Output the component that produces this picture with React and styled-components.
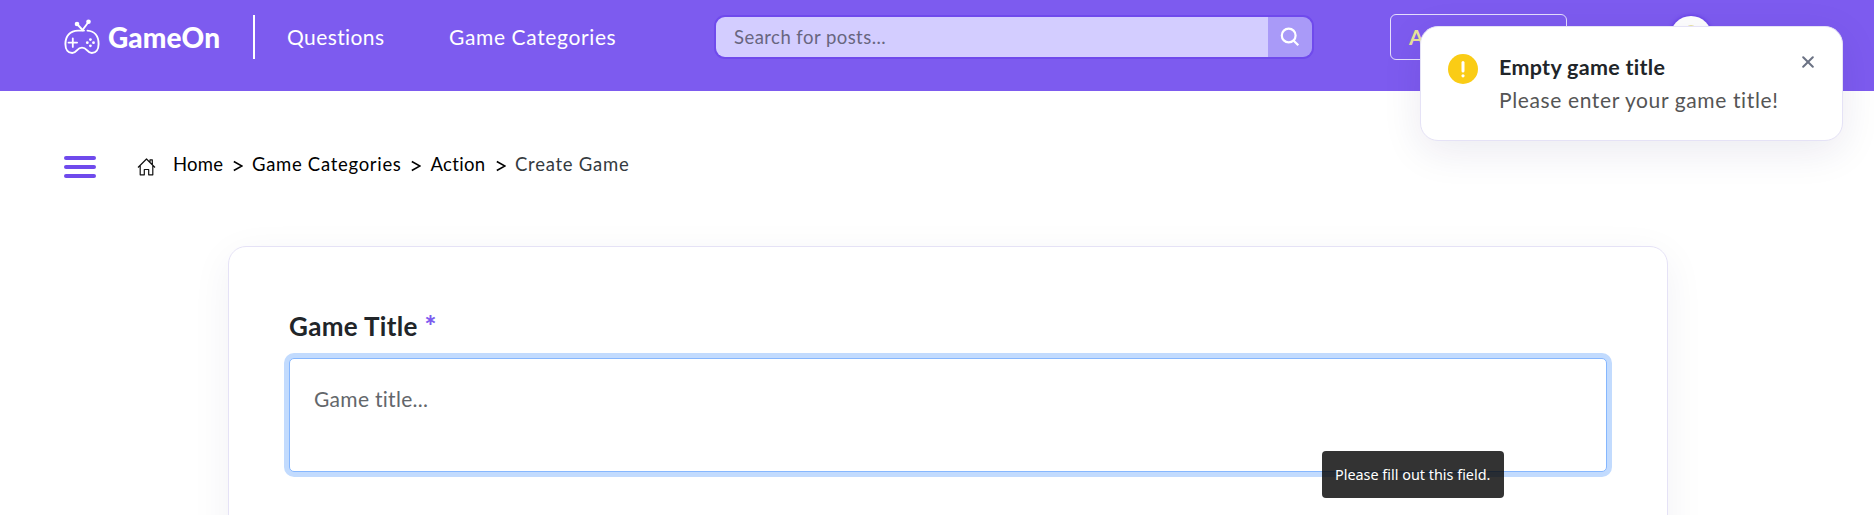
import React from "react";
import styled, { createGlobalStyle } from "styled-components";

const GlobalStyle = createGlobalStyle`
  *, *::before, *::after { box-sizing: border-box; }
  html, body { margin: 0; height: 515px; overflow: hidden; background: #fff; }
  body { font-family: Lato, "Open Sans", sans-serif; color: #212529; }
`;

const Page = styled.div`
  position: relative;
  height: 515px;
  overflow: hidden;
`;

const Header = styled.header`
  display: flex;
  align-items: flex-start;
  height: 91px;
  padding-left: 64px;
  background: #7d5bef;
  color: #fff;
`;

const Brand = styled.a`
  display: flex;
  align-items: center;
  width: 189px;
  height: 44px;
  margin-top: 15px;
  svg { width: 36px; height: 36px; margin-top: -1px; }
`;

const BrandName = styled.span`
  margin-left: 8px;
  font-size: 28px;
  font-weight: 900;
  line-height: 36px;
  letter-spacing: 0.1px;
`;

const Divider = styled.div`
  width: 2px;
  height: 44px;
  margin-top: 15px;
  background: #fff;
`;

const Nav = styled.nav`
  display: flex;
  width: 459px;
  padding-left: 32px;
  margin-top: 24px;
`;

const NavLink = styled.a`
  width: ${(p) => p.$width}px;
  font-size: 21px;
  line-height: 26px;
  letter-spacing: ${(p) => p.$spacing}px;
  white-space: nowrap;
`;

const Search = styled.div`
  display: flex;
  width: 600px;
  height: 44px;
  margin-top: 15px;
  border: 2px solid #6f4aec;
  border-radius: 11px;
  overflow: hidden;
`;

const SearchInput = styled.input`
  flex: 1;
  min-width: 0;
  padding: 0 0 1px 18px;
  border: 0;
  outline: 0;
  background: #d3cdff;
  font-family: inherit;
  font-size: 18.5px;
  letter-spacing: 0.45px;
  &::placeholder { color: #686680; opacity: 1; }
`;

const SearchButton = styled.button`
  display: flex;
  align-items: center;
  justify-content: center;
  width: 44px;
  padding: 0;
  border: 0;
  background: #a99af8;
`;

const AskButton = styled.button`
  width: 177px;
  height: 46px;
  margin: 14px 0 0 76px;
  padding: 0 0 2px 18px;
  border: 1px solid #e5defc;
  border-radius: 6px;
  background: transparent;
  color: #e8e39a;
  font-family: inherit;
  font-size: 21px;
  font-weight: 700;
  text-align: left;
`;

const Avatar = styled.div`
  display: flex;
  justify-content: center;
  width: 42px;
  height: 42px;
  margin: 16px 0 0 103px;
  padding-top: 9px;
  border-radius: 50%;
  background: #fff;
  box-shadow: 0 0 4px #5a2fe0;
`;

const AvatarMark = styled.span`
  width: 12px;
  height: 12px;
  border-radius: 50%;
  border-top: 3px solid #e9e3a0;
`;

const CrumbBar = styled.div`
  display: flex;
  align-items: center;
  height: 38px;
  margin-top: 57px;
  padding-left: 64px;
`;

const Burger = styled.button`
  display: flex;
  flex-direction: column;
  justify-content: space-between;
  width: 32px;
  height: 22px;
  padding: 0;
  border: 0;
  background: none;
`;

const BurgerLine = styled.span`
  width: 32px;
  height: 4px;
  border-radius: 2px;
  background: #6f4aec;
`;

const HomeMark = styled.span`
  display: flex;
  width: 77px;
  padding-left: 41px;
`;

const Crumb = styled.span`
  width: ${(p) => p.$width}px;
  margin-top: -6px;
  color: ${(p) => (p.$current ? "#343a40" : "#000")};
  font-size: 18.5px;
  line-height: 24px;
  letter-spacing: ${(p) => p.$spacing || 0}px;
  white-space: nowrap;
`;

const Chevron = styled.svg`
  width: 10px;
  height: 12px;
  margin: -2px 9.5px 0;
  fill: none;
  stroke: #000;
  stroke-width: 1.6;
`;

const Card = styled.main`
  width: 1440px;
  height: 500px;
  margin: 60px 0 0 228px;
  padding: 60px 59px 0 60px;
  border: 1px solid #e5e2f6;
  border-radius: 18px;
  box-shadow: 0 10px 40px rgba(30, 20, 90, 0.06);
`;

const Label = styled.label`
  display: block;
  height: 51px;
  padding-top: 2px;
  font-size: 26px;
  font-weight: 700;
  line-height: 34px;
  letter-spacing: 0.35px;
`;

const Required = styled.span`
  color: #7d5bef;
  font-size: 28px;
  font-weight: 900;
  line-height: 30px;
`;

const TitleInput = styled.textarea`
  display: block;
  width: 1318px;
  height: 114px;
  padding: 26px 24px;
  border: 1px solid #86b7fe;
  border-radius: 5px;
  outline: 0;
  resize: none;
  box-shadow: 0 0 0 5px #c2dbfe;
  font-family: inherit;
  font-size: 21px;
  line-height: 28px;
  letter-spacing: 0.3px;
  &::placeholder { color: #63676b; opacity: 1; }
`;

const Toast = styled.aside`
  position: absolute;
  top: 26px;
  left: 1420px;
  display: flex;
  width: 423px;
  height: 115px;
  padding: 27px 0 0 27px;
  border: 1px solid #e5e2f6;
  border-radius: 18px;
  background: #fff;
  box-shadow: 0 10px 40px rgba(30, 20, 90, 0.09);
`;

const WarningIcon = styled.svg`
  width: 30px;
  height: 30px;
`;

const ToastBody = styled.div`
  width: 303px;
  margin: -1px 0 0 21px;
`;

const ToastTitle = styled.div`
  font-size: 21.5px;
  font-weight: 700;
  line-height: 28px;
  letter-spacing: 0.3px;
`;

const ToastText = styled.div`
  margin-top: 4px;
  color: #555;
  font-size: 21px;
  line-height: 30px;
  letter-spacing: 0.62px;
  white-space: nowrap;
`;

const CloseIcon = styled.svg`
  width: 12px;
  height: 12px;
  margin-top: 2px;
  fill: none;
  stroke: #6b7284;
  stroke-width: 2;
  stroke-linecap: round;
`;

const Tooltip = styled.div`
  position: absolute;
  top: 451px;
  left: 1322px;
  width: 182px;
  height: 47px;
  padding-left: 13px;
  border-radius: 4px;
  background: rgba(0, 0, 0, 0.8);
  color: #fff;
  font-family: "Noto Sans", sans-serif;
  font-size: 14.4px;
  line-height: 47px;
  white-space: nowrap;
`;

const GamepadLogo = () => (
  <svg viewBox="0 0 36 36" fill="none" stroke="#fff" strokeWidth="1.9" strokeLinecap="round">
    <path d="M20 11.6H14C6 11.6 1.4 17.5 1.4 25C1.4 30.5 4.2 34 8.2 34C13 34 12.8 28.6 18 28.6S23 34 27.8 34C31.8 34 34.6 30.5 34.6 25C34.6 17 30.3 12 23.5 11.6" />
    <path d="M13 5L18.5 11L24.5 3" />
    <path d="M4.5 23.6H13.1M8.8 19.3V27.9" strokeWidth="1.8" />
    <g fill="#fff" stroke="none">
      <circle cx="13" cy="5" r="2.3" />
      <circle cx="24.5" cy="2.8" r="2.3" />
      <circle cx="26.4" cy="20.6" r="1.4" />
      <circle cx="26.4" cy="26.8" r="1.4" />
      <circle cx="23.3" cy="23.7" r="1.4" />
      <circle cx="29.5" cy="23.7" r="1.4" />
    </g>
  </svg>
);

const Separator = () => (
  <Chevron viewBox="0 0 10 12">
    <path d="M0.8 1.5L9 6L0.8 10.5" />
  </Chevron>
);

export default function App() {
  return (
    <Page>
      <GlobalStyle />
      <Header>
        <Brand>
          <GamepadLogo />
          <BrandName>GameOn</BrandName>
        </Brand>
        <Divider />
        <Nav>
          <NavLink $width={162} $spacing={0.4}>Questions</NavLink>
          <NavLink $width={180} $spacing={0.63}>Game Categories</NavLink>
        </Nav>
        <Search>
          <SearchInput placeholder="Search for posts..." />
          <SearchButton aria-label="Search">
            <svg width="20" height="20" viewBox="0 0 20 20" fill="none" stroke="#fff" strokeWidth="2.2">
              <circle cx="8.7" cy="8.5" r="6.9" />
              <path d="M13.2 13.2L18.3 18.2" />
            </svg>
          </SearchButton>
        </Search>
        <AskButton>A</AskButton>
        <Avatar><AvatarMark /></Avatar>
      </Header>

      <CrumbBar>
        <Burger aria-label="Menu">
          <BurgerLine />
          <BurgerLine />
          <BurgerLine />
        </Burger>
        <HomeMark>
          <svg width="19" height="18" viewBox="0 0 19 18" fill="none" stroke="#111" strokeWidth="1.2" strokeLinejoin="round">
            <path d="M1 9.5L9.5 1L18 9.5M3.2 7.5V16.8H7.3V11.5H11.7V16.8H15.8V7.5M13 4V1.8H15.3V6.5" />
          </svg>
        </HomeMark>
        <Crumb $width={50} $spacing={0.2}>Home</Crumb>
        <Separator />
        <Crumb $width={149.5} $spacing={0.7}>Game Categories</Crumb>
        <Separator />
        <Crumb $width={55.5} $spacing={0.3}>Action</Crumb>
        <Separator />
        <Crumb $width={120} $spacing={0.75} $current>Create Game</Crumb>
      </CrumbBar>

      <Card>
        <Label>Game Title <Required>*</Required></Label>
        <TitleInput placeholder="Game title..." />
      </Card>

      <Toast>
        <WarningIcon viewBox="0 0 30 30">
          <circle cx="15" cy="15" r="15" fill="#facc15" />
          <path d="M15 8.5V17" stroke="#fff" strokeWidth="3" strokeLinecap="round" />
          <circle cx="15" cy="21.8" r="1.6" fill="#fff" />
        </WarningIcon>
        <ToastBody>
          <ToastTitle>Empty game title</ToastTitle>
          <ToastText>Please enter your game title!</ToastText>
        </ToastBody>
        <CloseIcon viewBox="0 0 12 12">
          <path d="M1.2 1.2L10.8 10.8M10.8 1.2L1.2 10.8" />
        </CloseIcon>
      </Toast>

      <Tooltip>Please fill out this field.</Tooltip>
    </Page>
  );
}
